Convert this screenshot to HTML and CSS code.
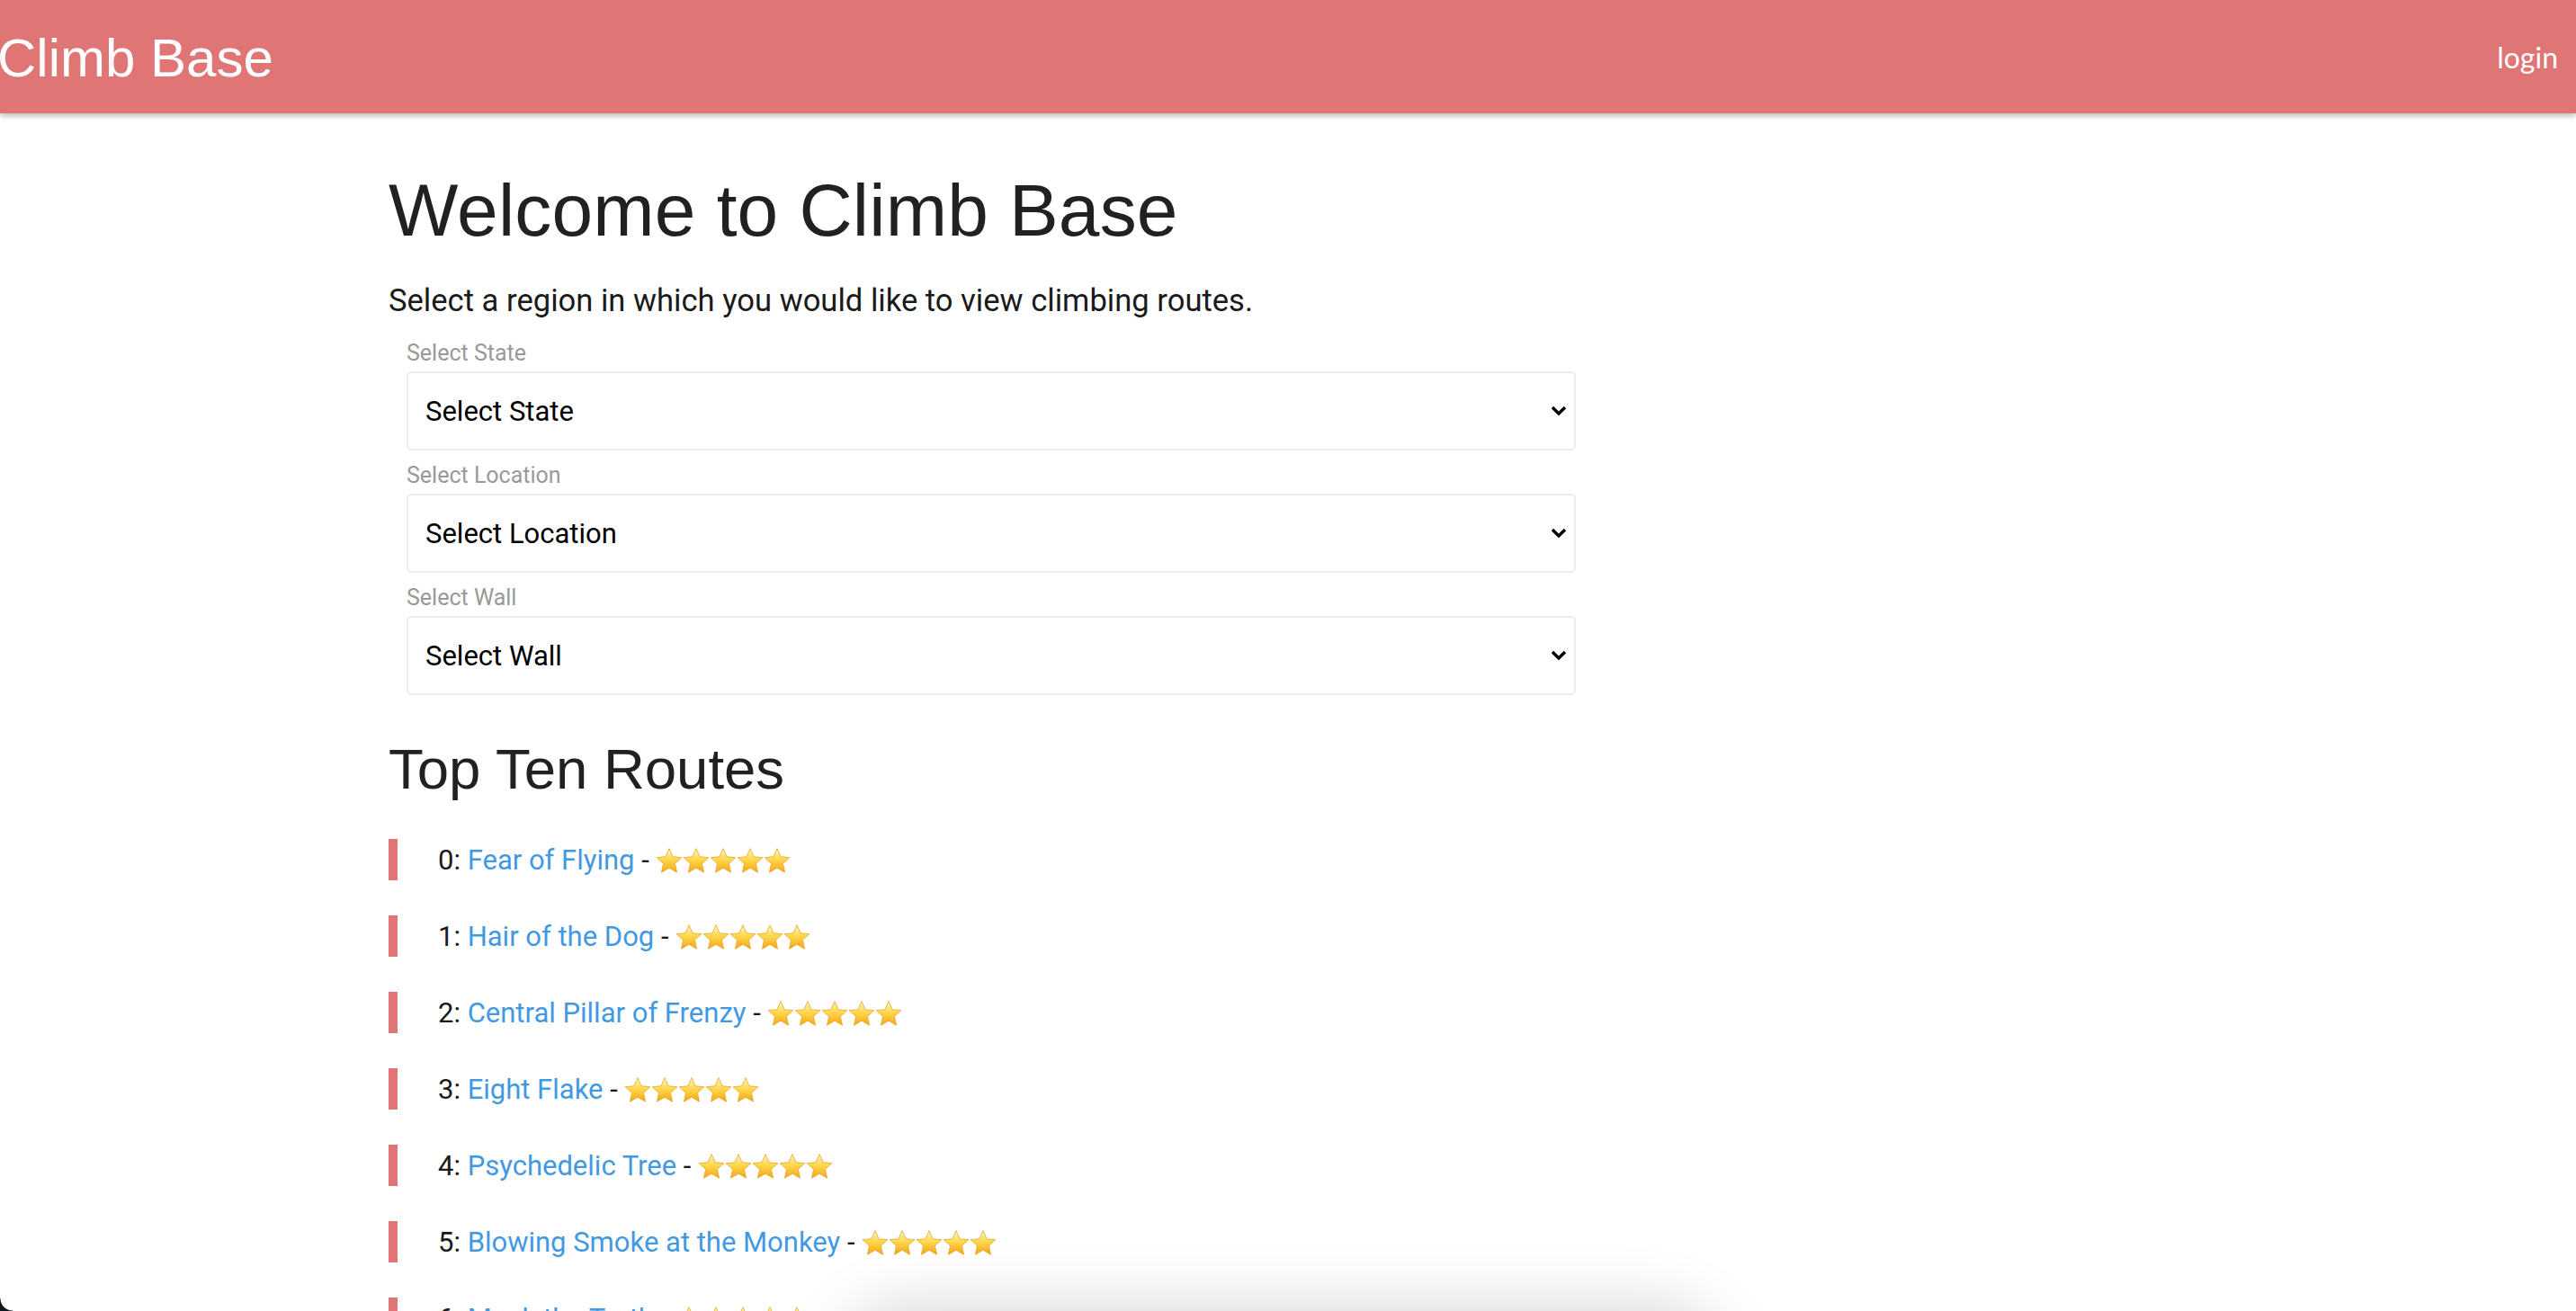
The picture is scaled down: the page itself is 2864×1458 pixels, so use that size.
FILE: index.html
```html
<!DOCTYPE html>
<html lang="en">
<head>
<meta charset="utf-8">
<title>Climb Base</title>
<link rel="stylesheet" href="styles.css">
</head>
<body>
<svg class="defs" width="0" height="0" aria-hidden="true">
  <defs>
    <linearGradient id="starFill" x1="0" y1="0" x2="0" y2="1">
      <stop offset="0" stop-color="#fff7cc"/>
      <stop offset="0.45" stop-color="#ffd94e"/>
      <stop offset="1" stop-color="#f5a516"/>
    </linearGradient>
    <symbol id="star" viewBox="0.6 0.7 22.8 21.2" preserveAspectRatio="none">
      <path d="M12 1.2l3.05 6.9 7.45.75-5.6 5.05 1.6 7.4L12 17.5l-6.5 3.8 1.6-7.4-5.6-5.05 7.45-.75z" fill="url(#starFill)" stroke="#eaa21c" stroke-width="0.6" stroke-linejoin="round"/>
    </symbol>
  </defs>
</svg>

<header class="navbar">
  <a class="brand" href="#">Climb Base</a>
  <a class="login" href="#">login</a>
</header>

<main class="container">
  <h1 class="title">Welcome to Climb Base</h1>
  <p class="lead">Select a region in which you would like to view climbing routes.</p>

  <form class="filters">
    <label class="field-label" for="state">Select State</label>
    <div class="select-wrap">
      <select id="state" class="select"><option>Select State</option></select>
      <svg class="chev" viewBox="0 0 18 11"><path d="M2 2l7 7 7-7" fill="none" stroke="#000" stroke-width="3.4"/></svg>
    </div>
    <label class="field-label" for="location">Select Location</label>
    <div class="select-wrap">
      <select id="location" class="select"><option>Select Location</option></select>
      <svg class="chev" viewBox="0 0 18 11"><path d="M2 2l7 7 7-7" fill="none" stroke="#000" stroke-width="3.4"/></svg>
    </div>
    <label class="field-label" for="wall">Select Wall</label>
    <div class="select-wrap">
      <select id="wall" class="select"><option>Select Wall</option></select>
      <svg class="chev" viewBox="0 0 18 11"><path d="M2 2l7 7 7-7" fill="none" stroke="#000" stroke-width="3.4"/></svg>
    </div>
  </form>

  <h2 class="subtitle">Top Ten Routes</h2>
  <ul class="routes">
    <li class="route">0: <a href="#">Fear of Flying</a> - <span class="stars"><svg><use href="#star"/></svg><svg><use href="#star"/></svg><svg><use href="#star"/></svg><svg><use href="#star"/></svg><svg><use href="#star"/></svg></span></li>
    <li class="route">1: <a href="#">Hair of the Dog</a> - <span class="stars"><svg><use href="#star"/></svg><svg><use href="#star"/></svg><svg><use href="#star"/></svg><svg><use href="#star"/></svg><svg><use href="#star"/></svg></span></li>
    <li class="route">2: <a href="#">Central Pillar of Frenzy</a> - <span class="stars"><svg><use href="#star"/></svg><svg><use href="#star"/></svg><svg><use href="#star"/></svg><svg><use href="#star"/></svg><svg><use href="#star"/></svg></span></li>
    <li class="route">3: <a href="#">Eight Flake</a> - <span class="stars"><svg><use href="#star"/></svg><svg><use href="#star"/></svg><svg><use href="#star"/></svg><svg><use href="#star"/></svg><svg><use href="#star"/></svg></span></li>
    <li class="route">4: <a href="#">Psychedelic Tree</a> - <span class="stars"><svg><use href="#star"/></svg><svg><use href="#star"/></svg><svg><use href="#star"/></svg><svg><use href="#star"/></svg><svg><use href="#star"/></svg></span></li>
    <li class="route">5: <a href="#">Blowing Smoke at the Monkey</a> - <span class="stars"><svg><use href="#star"/></svg><svg><use href="#star"/></svg><svg><use href="#star"/></svg><svg><use href="#star"/></svg><svg><use href="#star"/></svg></span></li>
    <li class="route">6: <a href="#">Mock the Truth</a> - <span class="stars"><svg><use href="#star"/></svg><svg><use href="#star"/></svg><svg><use href="#star"/></svg><svg><use href="#star"/></svg><svg><use href="#star"/></svg></span></li>
  </ul>
</main>

<div class="dock-shadow" aria-hidden="true"></div>
<div class="corner-bl" aria-hidden="true"></div>
</body>
</html>
```

FILE: styles.css
```css
* { box-sizing: border-box; }

html, body {
  margin: 0;
  padding: 0;
  background: #ffffff;
}

body {
  font-family: Roboto, "Liberation Sans", Arial, sans-serif;
  color: #212529;
  overflow: hidden;
  height: 1458px;
}

.defs {
  position: absolute;
  width: 0;
  height: 0;
}

.navbar {
  height: 126px;
  background: #e07575;
  display: flex;
  align-items: center;
  justify-content: space-between;
  padding: 0 20px 0 0;
  box-shadow: 0 3px 6px rgba(0, 0, 0, 0.28);
  position: relative;
  z-index: 2;
}

.brand {
  font-family: "Liberation Sans", Arial, sans-serif;
  font-size: 60px;
  color: #ffffff;
  text-decoration: none;
  margin-left: -3px;
  margin-top: 2px;
}

.login {
  font-family: Lato, "Liberation Sans", sans-serif;
  font-size: 32px;
  color: #ffffff;
  text-decoration: none;
}

.container {
  width: 2000px;
  margin: 0 auto;
  padding-top: 59px;
}

.title {
  font-family: "Liberation Sans", Arial, sans-serif;
  font-weight: 400;
  font-size: 82px;
  line-height: 98px;
  margin: 0;
  color: #212121;
  letter-spacing: 0.2px;
}

.lead {
  font-size: 34.6px;
  line-height: 52px;
  margin: 25px 0 0;
  color: #1a1a1a;
}

.filters {
  width: 1340px;
  padding: 0 20px;
  margin-top: 15px;
}

.field-label {
  display: block;
  font-size: 25px;
  line-height: 36px;
  color: #999999;
  margin-bottom: 2px;
}

.select-wrap {
  position: relative;
  margin-bottom: 10px;
}

.select {
  display: block;
  width: 100%;
  height: 88px;
  appearance: none;
  -webkit-appearance: none;
  background: #ffffff;
  border: 2px solid #ececec;
  border-radius: 5px;
  padding: 0 60px 0 19px;
  font-family: Roboto, "Liberation Sans", sans-serif;
  font-size: 31px;
  color: #000000;
  outline: none;
}

.chev {
  position: absolute;
  right: 10px;
  top: 38px;
  width: 18px;
  height: 11px;
  pointer-events: none;
}

.subtitle {
  font-family: "Liberation Sans", Arial, sans-serif;
  font-weight: 400;
  font-size: 63.5px;
  line-height: 78px;
  margin: 43px 0 0;
  color: #212121;
}

.routes {
  list-style: none;
  margin: 39px 0 0;
  padding: 0;
}

.route {
  display: flex;
  align-items: center;
  white-space: pre;
  height: 46px;
  border-left: 10px solid #e07575;
  padding-left: 45px;
  margin-bottom: 39px;
  font-size: 31px;
  color: #1a1a1a;
}

.route a {
  color: #4299e1;
  text-decoration: none;
}

.stars {
  display: inline-flex;
  align-items: center;
  margin-top: 2px;
}

.stars svg {
  width: 30px;
  height: 28px;
  display: block;
}

.dock-shadow {
  position: fixed;
  left: 50%;
  transform: translateX(-50%);
  top: 1470px;
  width: 940px;
  height: 120px;
  margin-left: -8px;
  border-radius: 50px;
  background: #ffffff;
  box-shadow: 0 0 70px 18px rgba(0, 0, 0, 0.16);
}

.corner-bl {
  position: fixed;
  left: 0;
  bottom: 0;
  width: 14px;
  height: 14px;
  background: radial-gradient(circle at 100% 0, rgba(0,0,0,0) 13px, #0c1a20 14px);
}
```
